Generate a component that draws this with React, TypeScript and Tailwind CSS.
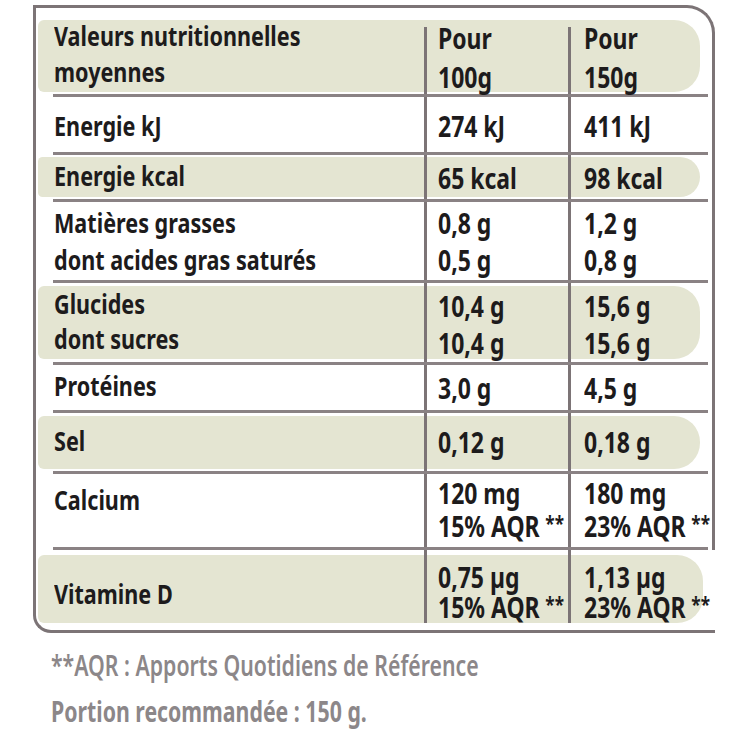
import * as React from "react"

const font = { fontFamily: "'Noto Sans', 'DejaVu Sans', sans-serif" }

function Stars() {
  return <span className="relative -top-[6px] ml-[7px] text-[21px]">**</span>
}

type RowProps = {
  hl?: string
  last?: boolean
  rowClass: string
  labelClass: string
  valClass: string
  cellClass?: string
  label: React.ReactNode
  a: React.ReactNode
  b: React.ReactNode
}

function Row({ hl, last, rowClass, labelClass, valClass, cellClass = "", label, a, b }: RowProps) {
  return (
    <div
      className={
        "relative isolate ml-[17px] mr-[4px] flex " +
        (last ? "" : "border-b-[3px] border-[#8a8284] ") +
        rowClass
      }
    >
      {hl && (
        <div className={"absolute -left-[15px] right-[8px] -z-10 rounded-l-[6px] rounded-r-[26px] bg-[#e4e5d2] " + hl} />
      )}
      <div className="w-[371px] shrink-0 pl-[1px] text-[27px] whitespace-nowrap">
        <div className={"origin-left scale-x-[0.8] " + labelClass}>{label}</div>
      </div>
      <div className={"w-[144px] shrink-0 border-l-[3px] border-[#7c7476] pl-[11px] text-[28px] whitespace-nowrap " + cellClass}>
        <div className={"origin-left scale-x-[0.82] " + valClass}>{a}</div>
      </div>
      <div className={"min-w-0 flex-1 border-l-[3px] border-[#7c7476] pl-[13px] text-[28px] whitespace-nowrap " + cellClass}>
        <div className={"origin-left scale-x-[0.82] " + valClass}>{b}</div>
      </div>
    </div>
  )
}

export default function App() {
  return (
    <div className="min-h-[750px] w-[750px] bg-white pt-[5px] font-bold text-[#1d1b1c]" style={font}>
      <div className="ml-[33px] w-[682px] rounded-bl-[18px] border-b-[3px] border-l-[3px] border-[#7c7476]">
        <div className="rounded-tr-[28px] border-r-[3px] border-t-[3px] border-[#7c7476]">
          <Row
            hl="top-[12px] bottom-[2px]"
            rowClass="h-[89px]"
            labelClass="pt-[10px] leading-[36px]"
            cellClass="mt-[19px]"
            valClass="-mt-[8px] leading-[39px]"
            label={<>Valeurs nutritionnelles<br />moyennes</>}
            a={<>Pour<br />100g</>}
            b={<>Pour<br />150g</>}
          />
          <Row
            rowClass="h-[58px]"
            labelClass="pt-[11px] leading-[36px]"
            valClass="pt-[11px] leading-[36px]"
            label="Energie kJ"
            a="274 kJ"
            b="411 kJ"
          />
          <Row
            hl="top-[2px] bottom-[2px]"
            rowClass="h-[47px]"
            labelClass="pt-[3px] leading-[36px]"
            valClass="pt-[5px] leading-[36px]"
            label="Energie kcal"
            a="65 kcal"
            b="98 kcal"
          />
          <Row
            rowClass="h-[81px]"
            labelClass="pt-[2px] leading-[37px]"
            valClass="pt-[3px] leading-[37px]"
            label={<>Matières grasses<br />dont acides gras saturés</>}
            a={<>0,8 g<br />0,5 g</>}
            b={<>1,2 g<br />0,8 g</>}
          />
          <Row
            hl="top-[3px] bottom-[3px]"
            rowClass="h-[82px]"
            labelClass="pt-[3px] leading-[35px]"
            valClass="pt-[5px] leading-[37px]"
            label={<>Glucides<br />dont sucres</>}
            a={<>10,4 g<br />10,4 g</>}
            b={<>15,6 g<br />15,6 g</>}
          />
          <Row
            rowClass="h-[48px]"
            labelClass="pt-[3px] leading-[36px]"
            valClass="pt-[5px] leading-[36px]"
            label="Protéines"
            a="3,0 g"
            b="4,5 g"
          />
          <Row
            hl="top-[3px] bottom-[2px]"
            rowClass="h-[61px]"
            labelClass="pt-[10px] leading-[36px]"
            valClass="pt-[11px] leading-[36px]"
            label="Sel"
            a="0,12 g"
            b="0,18 g"
          />
          <Row
            rowClass="h-[76px]"
            labelClass="pt-[8px] leading-[36px]"
            valClass="pt-[3px] leading-[33px]"
            label="Calcium"
            a={<>120 mg<br />15% AQR<Stars /></>}
            b={<>180 mg<br />23% AQR<Stars /></>}
          />
        </div>
        <Row
          hl="top-[5px] bottom-[7px]"
          last
          rowClass="h-[80px]"
          labelClass="pt-[26px] leading-[36px]"
          cellClass="mb-[7px]"
          valClass="pt-[12px] leading-[30px]"
          label="Vitamine D"
          a={<>0,75 µg<br />15% AQR<Stars /></>}
          b={<>1,13 µg<br />23% AQR<Stars /></>}
        />
      </div>
      <div className="ml-[51px] mt-[9px] origin-left scale-x-[0.76] whitespace-nowrap text-[28px] leading-[46px] text-[#8c8789]">
        <p className="font-semibold">**AQR : Apports Quotidiens de Référence</p>
        <p className="font-bold">Portion recommandée : 150 g.</p>
      </div>
    </div>
  )
}
